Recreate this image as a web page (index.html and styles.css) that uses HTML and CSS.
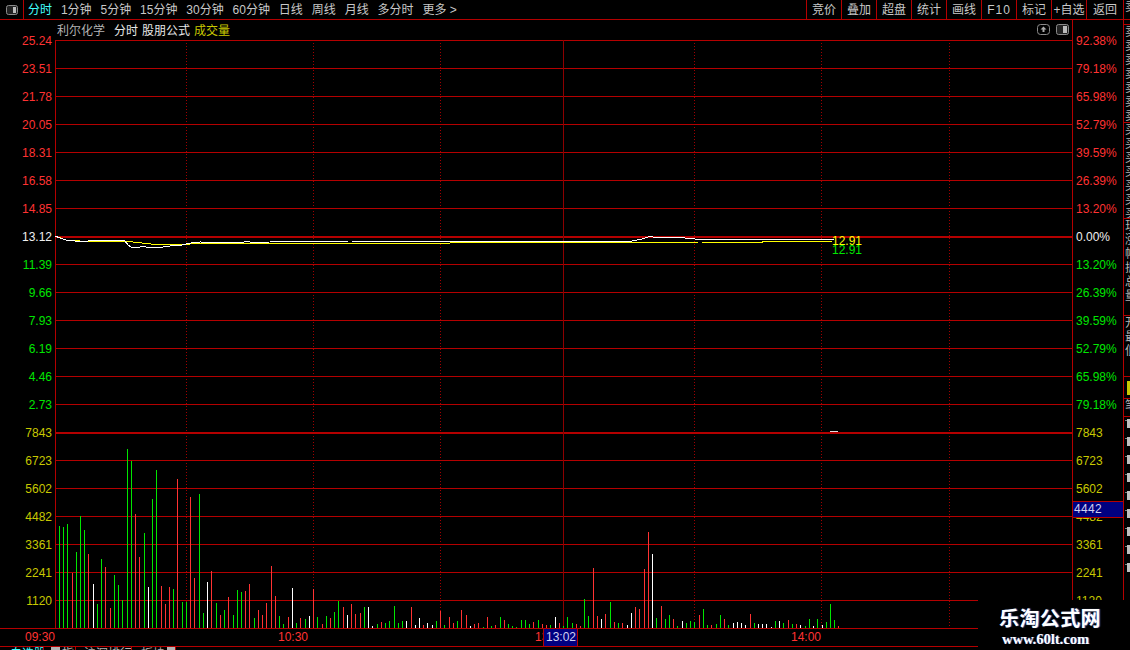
FILE: index.html
```html
<!DOCTYPE html>
<html lang="zh-CN">
<head>
    <meta charset="UTF-8">
    <meta name="viewport" content="width=device-width, initial-scale=1.0">
    <title>利尔化学 分时</title>
    <link rel="stylesheet" href="styles.css">
</head>
<body>
    <div id="app">
        <div class="toolbar">
            <div class="tool-icon">
                <svg width="14" height="12" viewBox="0 0 14 12"><rect x="1.5" y="1.5" width="11" height="9" rx="2" fill="#222" stroke="#8a8a8a"/><rect x="8" y="3" width="3" height="6" fill="#bbb"/></svg>
            </div>
            <div class="periods">
                <span class="active">分时</span>
                <span>1分钟</span>
                <span>5分钟</span>
                <span>15分钟</span>
                <span>30分钟</span>
                <span>60分钟</span>
                <span>日线</span>
                <span>周线</span>
                <span>月线</span>
                <span>多分时</span>
                <span>更多 &gt;</span>
            </div>
            <div class="actions">
                <span>竞价</span>
                <span>叠加</span>
                <span>超盘</span>
                <span>统计</span>
                <span>画线</span>
                <span class="f10">F10</span>
                <span>标记</span>
                <span>+自选</span>
                <span class="back">返回</span>
                <span class="corner"></span>
            </div>
        </div>

        <div class="main">
            <div class="axis axis-left">
                <div class="tick up">25.24</div>
                <div class="tick up">23.51</div>
                <div class="tick up">21.78</div>
                <div class="tick up">20.05</div>
                <div class="tick up">18.31</div>
                <div class="tick up">16.58</div>
                <div class="tick up">14.85</div>
                <div class="tick flat">13.12</div>
                <div class="tick down">11.39</div>
                <div class="tick down">9.66</div>
                <div class="tick down">7.93</div>
                <div class="tick down">6.19</div>
                <div class="tick down">4.46</div>
                <div class="tick down">2.73</div>
                <div class="tick vol">7843</div>
                <div class="tick vol">6723</div>
                <div class="tick vol">5602</div>
                <div class="tick vol">4482</div>
                <div class="tick vol">3361</div>
                <div class="tick vol">2241</div>
                <div class="tick vol">1120</div>
            </div>

            <div class="chart">
                <div class="chart-title">
                    <span class="stock">利尔化学</span>
                    <span class="mode">分时</span>
                    <span class="formula">股朋公式</span>
                    <span class="volume">成交量</span>
                    <span class="chart-icons">
                        <svg width="13" height="11" viewBox="0 0 13 11"><rect x="0.5" y="0.5" width="12" height="10" rx="3" fill="none" stroke="#8a8a8a"/><path d="M6.5 2.5 L9.5 5.5 H7.5 V8 H5.5 V5.5 H3.5 Z" fill="#aaa"/></svg>
                        <svg width="13" height="11" viewBox="0 0 13 11"><rect x="0.5" y="0.5" width="12" height="10" rx="2" fill="#222" stroke="#8a8a8a"/><rect x="7" y="2" width="4" height="7" fill="#bbb"/></svg>
                    </span>
                </div>
                <svg id="plot" class="plot" width="1017" height="588" viewBox="55 40 1017 588"></svg>
            </div>

            <div class="axis axis-right">
                <div class="tick up">92.38%</div>
                <div class="tick up">79.18%</div>
                <div class="tick up">65.98%</div>
                <div class="tick up">52.79%</div>
                <div class="tick up">39.59%</div>
                <div class="tick up">26.39%</div>
                <div class="tick up">13.20%</div>
                <div class="tick flat">0.00%</div>
                <div class="tick down">13.20%</div>
                <div class="tick down">26.39%</div>
                <div class="tick down">39.59%</div>
                <div class="tick down">52.79%</div>
                <div class="tick down">65.98%</div>
                <div class="tick down">79.18%</div>
                <div class="tick vol">7843</div>
                <div class="tick vol">6723</div>
                <div class="tick vol">5602</div>
                <div class="tick vol">4482</div>
                <div class="tick vol">3361</div>
                <div class="tick vol">2241</div>
                <div class="tick vol">1120</div>
                <div class="price-tag">4442</div>
            </div>

            <div class="side">
                <div class="side-cell h25"><div class="side-text">卖</div></div>
                <div class="side-cell h98"><div class="side-text">卖卖卖卖卖卖卖</div></div>
                <div class="side-cell h96"><div class="side-text">买买买买买买买</div></div>
                <div class="side-cell h97"><div class="side-text">现 涨 幅 振 总 量</div></div>
                <div class="side-cell h61"><div class="side-text">开 最 低</div></div>
                <div class="side-cell h22 side-flag"></div>
                <div class="side-cell h18"><div class="side-text">笔</div></div>
                <div class="side-rows" id="sideRows"></div>
            </div>
        </div>

        <div class="timebar">
            <span>09:30</span>
            <span>10:30</span>
            <span>13:00</span>
            <span>14:00</span>
            <div class="time-tag">13:02</div>
        </div>

        <div class="tabs">
            <span class="tab first"><b class="cyan">自选股</b><i class="box cyan-box"></i></span>
            <span class="tab second"><i class="box"></i>指</span>
            <span class="tab third">沪深排行榜</span>
            <span class="tab fourth">板块<i class="box"></i></span>
        </div>

        <div class="watermark">
            <div class="wm-name">乐淘公式网</div>
            <div class="wm-url">www.60lt.com</div>
        </div>
    </div>

    <script src="script.js"></script>
</body>
</html>
```

FILE: styles.css
```css
html, body {
    margin: 0;
    background-color: #000;
}

#app {
    position: relative;
    display: flex;
    flex-direction: column;
    width: 1130px;
    height: 650px;
    overflow: hidden;
    background-color: #000;
    color: #c8c8c8;
    font-family: "Liberation Sans", "Noto Sans CJK SC", sans-serif;
    font-size: 12px;
}

.toolbar {
    display: flex;
    flex: none;
    height: 19px;
    line-height: 20px;
    border-bottom: 1px solid #b40000;
}

.tool-icon {
    display: flex;
    align-items: center;
    justify-content: center;
    width: 23px;
    border-right: 1px solid #b40000;
}

.periods {
    display: flex;
    gap: 8.9px;
    padding-left: 4px;
}

.periods .active {
    color: #40ffff;
}

.actions {
    display: flex;
    margin-left: auto;
}

.actions span {
    width: 34px;
    border-left: 1px solid #b40000;
    text-align: center;
    white-space: nowrap;
}

.actions .f10 {
    letter-spacing: 1px;
}

.actions .back {
    width: 36px;
}

.actions .corner {
    width: 6px;
}

.main {
    display: flex;
    flex: none;
    height: 608px;
}

.axis {
    position: relative;
    flex: none;
    box-sizing: border-box;
    padding-top: 7px;
}

.axis-left {
    width: 55px;
    padding-right: 3px;
    text-align: right;
}

.axis-right {
    width: 51px;
    padding-left: 3px;
    border-left: 1px solid #b40000;
}

.tick {
    height: 28px;
    line-height: 28px;
}

.tick.up { color: #ff3232; }
.tick.down { color: #00e600; }
.tick.flat { color: #f0f0f0; }
.tick.vol { color: #c8c800; }

.price-tag {
    position: absolute;
    top: 481px;
    left: 0;
    width: 49px;
    height: 15px;
    padding-left: 1px;
    line-height: 15px;
    background-color: #000080;
    border-top: 1px solid #b40000;
    border-bottom: 1px solid #b40000;
    color: #d0d0f0;
    letter-spacing: 0.3px;
}

.chart {
    flex: none;
    width: 1017px;
}

.chart-title {
    display: flex;
    box-sizing: border-box;
    align-items: center;
    height: 20px;
    padding-left: 2px;
    padding-bottom: 2px;
    white-space: nowrap;
}

.chart-title .stock { color: #b4b4b4; margin-right: 9px; }
.chart-title .mode { color: #e8e8e8; margin-right: 4px; }
.chart-title .formula { color: #e8e8e8; margin-right: 4px; }
.chart-title .volume { color: #c8c800; }

.chart-icons {
    display: flex;
    gap: 6px;
    margin-left: auto;
    margin-right: 3px;
}

.plot {
    display: block;
}

.plot text {
    font-family: "Liberation Sans", sans-serif;
    font-size: 12px;
}

.side {
    flex: none;
    width: 7px;
    border-left: 1px solid #b40000;
    margin-top: -20px;
}

.side-cell {
    box-sizing: border-box;
    overflow: hidden;
    border-bottom: 1px solid #b40000;
}

.h25 { height: 25px; }
.h98 { height: 98px; }
.h96 { height: 96px; }
.h97 { height: 97px; }
.h61 { height: 61px; }
.h22 { height: 22px; }
.h18 { height: 18px; }

.side-text {
    width: 13px;
    margin-left: 1px;
    line-height: 14px;
    color: #b4b4b4;
}

.side-flag {
    background: linear-gradient(#c8c800, #c8c800) 3px 4px / 4px 14px no-repeat;
}

.side-row {
    height: 18px;
    background: linear-gradient(#c0c0c0, #c0c0c0) 3px 2px / 3px 9px no-repeat,
                linear-gradient(#808080, #808080) 1px 3px / 2px 1px no-repeat;
}

.timebar {
    position: relative;
    display: grid;
    grid-template-columns: 253px 257px 256px 1fr;
    flex: none;
    height: 17px;
    padding-left: 25px;
    line-height: 17px;
    border-top: 1px solid #b40000;
    border-bottom: 1px solid #b40000;
    color: #ff3232;
}

.time-tag {
    position: absolute;
    top: -1px;
    left: 543px;
    width: 31px;
    height: 17px;
    padding-left: 2px;
    border: 1px solid #b40000;
    background-color: #000080;
    color: #d0d0f0;
}

.tabs {
    display: flex;
    flex: none;
    height: 3px;
    overflow: hidden;
    line-height: 15px;
    color: #b4b4b4;
}

.tab {
    box-sizing: border-box;
    border-right: 1px solid #b40000;
    white-space: nowrap;
    overflow: hidden;
}

.tab.first { width: 44px; padding-left: 10px; }
.tab.second { width: 32px; padding-left: 5px; }
.tab.third { width: 56px; padding-left: 8px; }
.tab.fourth { width: 44px; padding-left: 9px; }

.tab b {
    font-weight: 400;
    color: #40ffff;
}

.box {
    display: inline-block;
    width: 9px;
    height: 14px;
    margin: 0 2px;
    vertical-align: top;
    background-color: #b4b4b4;
}

.box.cyan-box {
    background-color: #40ffff;
    margin: 0;
}

.watermark {
    position: absolute;
    top: 600px;
    left: 978px;
    width: 152px;
    height: 50px;
    background-color: #000;
    color: #fff;
    text-align: center;
}

.wm-name {
    margin-top: 6px;
    padding-right: 8px;
    line-height: 24px;
    font-family: "Noto Sans CJK SC", sans-serif;
    font-size: 20px;
    font-weight: 700;
    letter-spacing: 0.4px;
    text-shadow: 1px 0 1px #5566aa;
}

.wm-url {
    padding-right: 17px;
    line-height: 18px;
    font-family: "Liberation Serif", serif;
    font-size: 14.5px;
    font-weight: 700;
    text-shadow: 1px 0 0 #445599;
}
```

FILE: script.js
```js
const SVG_NS = 'http://www.w3.org/2000/svg';
const plot = document.getElementById('plot');

const GRID = '#b40000';
const COLORS = { R: '#ff3232', G: '#00e600', W: '#ffffff' };

// 每分钟成交量柱: 高度 + 颜色
const bars = ('102G 101G 104G 55R 76G 112G 98G 74R 44W 24G 69G 61R 20R 53G 43G 28G 179G 167G 114R 71R 95G 41W 129G 158G 42R 24R 41R 39G 149R 26G 26G 131R 50R 134G 15G 46W 57R 25G 13R 18G 31R 13G 38G 36G 37R 44R 10G 18R 13R 25R 62R 32R ' +
    '12G 4G 11R 40W 5G 10R 9G 12W 39R 11G 4R 12G 10R 16G 27G 21R 13W 24R 14R 15R 21G 21W 2W 4G 6R 5G 7G 22G 5G 7G 7W 21R 3W 10W 3R 5W 3W 7G 17R 3G 11R 5R 7G 18R 13R 2W 4R 5R 1G 11R 2G 3R 11G 8R 4G 2G 1G 8G 8G 4G 6R 8G 4R 3R 3G 11W 5R 2G 11G 5G 4R ' +
    '2R 29G 12G 60R 12R 9W 14R 26G 6R 5G 5R 3W 15W 21R 19R 59R 96R 74W 10G 22R 9G 13G 9R 2G 7W 5G 7G 6G 13R 19G 3G 3R 4G 13G 9R 3G 5W 6W 5W 3W 14R 5G 4W 4W 4W 1W 7G 7W 5G 8R 4G 4R 3W 2G 9G 2W 9G 3W 6G 24G 8G 2R').split(' ');

const priceLine = '55,236 60,238 66,240 75,241 83,242 90,240.5 125,241 128,245 131,247 136,248 142,246.5 150,247.5 160,247.5 170,246 180,245.5 186,244 193,242.5 200,242 240,242.5 248,241.5 252,242.5 270,242 276,241 290,241.5 350,241 400,241.5 450,242 500,241.5 560,242 630,241.5 642,239 650,236.5 658,238 670,237.5 685,238 700,239.5 760,240 790,239 834,239';
const avgLine = '55,236 66,240 80,241 125,241.5 133,242 155,244.5 186,244.5 195,243.5 300,243.5 450,243 640,242.5 700,242 760,242.5 765,241.5 834,241';

function add(name, attrs, text) {
    const el = document.createElementNS(SVG_NS, name);
    Object.keys(attrs).forEach(key => el.setAttribute(key, attrs[key]));
    if (text) el.textContent = text;
    plot.appendChild(el);
}

function rect(x, y, width, height, fill) {
    add('rect', { x, y, width, height, fill, 'shape-rendering': 'crispEdges' });
}

// 虚线时间格
[186, 313, 440, 694, 821, 949].forEach(x => {
    add('line', {
        x1: x + 0.5, x2: x + 0.5, y1: 43, y2: 628,
        stroke: '#a00000', 'stroke-dasharray': '1 2', 'shape-rendering': 'crispEdges'
    });
});

// 水平网格
for (let y = 40; y <= 600; y += 28) {
    const thick = y === 236 || y === 432;
    rect(55, y, 1017, thick ? 2 : 1, GRID);
}

rect(55, 40, 1, 588, GRID);
rect(563, 40, 1, 588, '#8c0000');

bars.forEach((bar, i) => {
    const height = parseInt(bar, 10);
    const color = COLORS[bar.slice(-1)];
    const x = Math.floor(59.3 + i * 4.2375);
    rect(x, 628 - height, 1, height, color);
});

add('polyline', { points: avgLine, fill: 'none', stroke: '#ffff00', 'shape-rendering': 'crispEdges' });
add('polyline', { points: priceLine, fill: 'none', stroke: '#ffffff', 'shape-rendering': 'crispEdges' });

add('text', { x: 832, y: 245, fill: '#ffff00' }, '12.91');
add('text', { x: 832, y: 254, fill: '#00e600' }, '12.91');

rect(830, 431, 8, 1, '#e0e0e0');

const sideRows = document.getElementById('sideRows');
for (let i = 0; i < 9; i++) {
    const row = document.createElement('div');
    row.className = 'side-row';
    sideRows.appendChild(row);
}
```
